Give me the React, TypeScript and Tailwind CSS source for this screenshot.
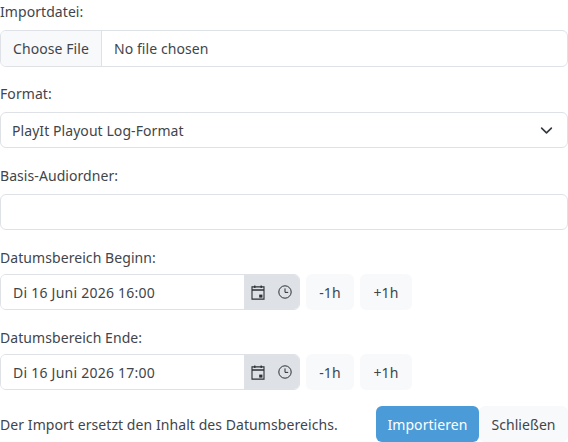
const font = { fontFamily: '"Noto Sans", sans-serif' };

function CalendarIcon() {
  return (
    <svg width="14" height="15" viewBox="0 0 14 15" fill="none" stroke="#2b3035" strokeWidth="1.1">
      <path d="M1 1.9h12v12.2H1z" />
      <path d="M1 5h12" strokeWidth="1.6" />
      <path d="M3.8 0.4v2.6M10.2 0.4v2.6" strokeWidth="1.3" />
      <rect x="8.2" y="9.6" width="3.2" height="3" fill="#2b3035" stroke="none" />
    </svg>
  );
}

function ClockIcon() {
  return (
    <svg width="14" height="14" viewBox="0 0 14 14" fill="none" stroke="#2b3035" strokeWidth="1">
      <circle cx="7" cy="7" r="6.2" />
      <path d="M7 3.4v4h3.2" />
    </svg>
  );
}

function DateRow({ label, value }: { label: string; value: string }) {
  return (
    <div>
      <label className="block h-[19px] mb-[8px] leading-[21px]">{label}</label>
      <div className="flex items-center h-[36px]">
        <div className="flex w-[300px] h-[36px] rounded-[6px] border border-[#dee2e6] overflow-hidden">
          <div className="flex-1 pl-[12px] flex items-center bg-white tracking-[0.24px]">{value}</div>
          <div className="w-[55px] bg-[#dee1e6] flex items-center justify-center gap-[13px]">
            <CalendarIcon />
            <ClockIcon />
          </div>
        </div>
        <button className="ml-[6px] w-[48px] h-[36px] rounded-[6px] bg-[#f8f9fa]">-1h</button>
        <button className="ml-[6px] w-[52px] h-[36px] rounded-[6px] bg-[#f8f9fa]">+1h</button>
      </div>
    </div>
  );
}

export default function App() {
  return (
    <div style={font} className="w-[568px] h-[442px] overflow-hidden bg-white text-[14px] text-[#3f454b] tracking-[0.07px]">
      <div className="pt-[1px]">
        <div className="mb-[16px]">
          <label className="block h-[21px] mb-[8px] leading-[21px]">Importdatei:</label>
          <div className="flex h-[37px] rounded-[6px] border border-[#dee2e6] overflow-hidden">
            <div className="w-[101px] flex items-center justify-center bg-[#f8f9fa] border-r border-[#dee2e6]">Choose File</div>
            <div className="pl-[12px] flex items-center">No file chosen</div>
          </div>
        </div>
        <div className="mb-[17px]">
          <label className="block h-[21px] mb-[8px] leading-[21px]">Format:</label>
          <div className="flex items-center justify-between h-[36px] rounded-[6px] border border-[#dee2e6] pl-[11px] pr-[14px]">
            <span>PlayIt Playout Log-Format</span>
            <svg width="13" height="13" viewBox="0 0 16 16" fill="none" stroke="#343a40" strokeWidth="2" strokeLinecap="round" strokeLinejoin="round">
              <path d="M2 5l6 6 6-6" />
            </svg>
          </div>
        </div>
        <div className="mb-[17px]">
          <label className="block h-[21px] mb-[8px] leading-[21px]">Basis-Audiordner:</label>
          <div className="h-[36px] rounded-[6px] border border-[#dee2e6]" />
        </div>
        <div className="mb-[17px]">
          <DateRow label="Datumsbereich Beginn:" value="Di 16 Juni 2026 16:00" />
        </div>
        <div className="mb-[16px]">
          <DateRow label="Datumsbereich Ende:" value="Di 16 Juni 2026 17:00" />
        </div>
        <div className="flex items-center justify-between">
          <span>Der Import ersetzt den Inhalt des Datumsbereichs.</span>
          <div className="flex">
            <button className="w-[103px] h-[36px] rounded-[6px] bg-[#4a9bd8] text-white">Importieren</button>
            <button className="w-[89px] h-[36px] rounded-[6px] bg-[#f8f9fa]">Schließen</button>
          </div>
        </div>
      </div>
    </div>
  );
}
